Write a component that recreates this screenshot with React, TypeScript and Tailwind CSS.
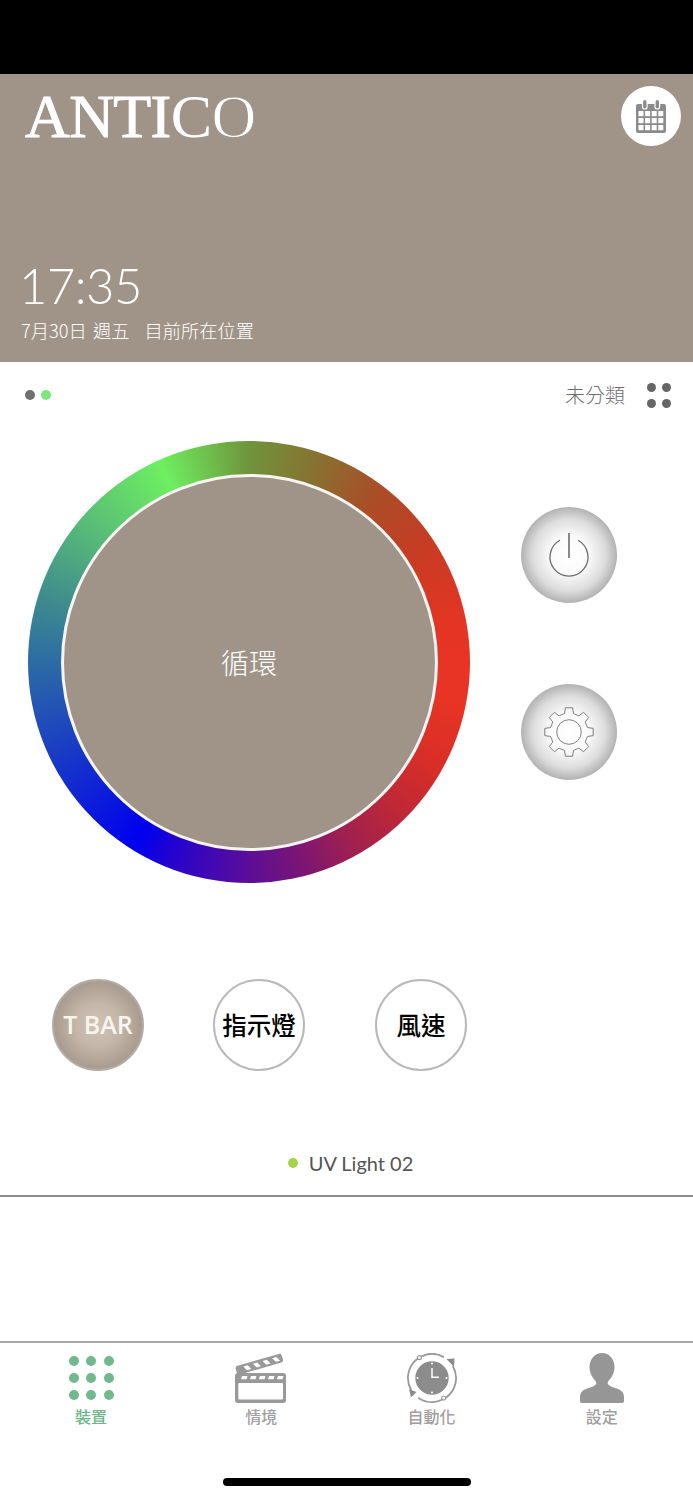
const CJK = "font-['Noto_Sans_CJK_TC',sans-serif]";

function gearPath(cx: number, cy: number, teeth: number, rOut: number, rIn: number) {
  const pts: string[] = [];
  const step = (Math.PI * 2) / teeth;
  for (let i = 0; i < teeth; i++) {
    const a = i * step - Math.PI / 2;
    const at = (r: number, d: number) =>
      `${(cx + r * Math.cos(a + d * step)).toFixed(2)} ${(cy + r * Math.sin(a + d * step)).toFixed(2)}`;
    pts.push(at(rIn, -0.3), at(rOut, -0.19), at(rOut, 0.19), at(rIn, 0.3));
  }
  return `M${pts.join("L")}Z`;
}

function CalendarIcon() {
  return (
    <svg width="32" height="36" viewBox="0 0 32 36">
      <rect x="1" y="6" width="30" height="29" rx="2" fill="#8b8b8b" />
      {[0, 1, 2, 3].map((c) =>
        [0, 1, 2].map((r) => (
          <rect key={`${c}-${r}`} x={3.5 + c * 6.6} y={13 + r * 7} width="5" height="5.2" fill="#fff" />
        )),
      )}
      <rect x="7.5" y="1.5" width="4.6" height="9.5" rx="2.3" fill="#8b8b8b" stroke="#fff" strokeWidth="1.2" />
      <rect x="20" y="1.5" width="4.6" height="9.5" rx="2.3" fill="#8b8b8b" stroke="#fff" strokeWidth="1.2" />
    </svg>
  );
}

function PowerIcon() {
  return (
    <svg width="44" height="46" viewBox="0 0 44 46" fill="none" stroke="#6c6c6c">
      <path d="M13 8.300A19 19 0 1 0 31 8.300" strokeWidth="1.3" />
      <path d="M22 1V26" strokeWidth="1.6" />
    </svg>
  );
}

function GearIcon() {
  return (
    <svg width="52" height="52" viewBox="0 0 52 52" fill="none" stroke="#7f7f7f" strokeWidth="1">
      <path d={gearPath(26, 26, 8, 24.5, 19)} strokeLinejoin="round" />
      <circle cx="26" cy="26" r="12.3" />
    </svg>
  );
}

function DevicesIcon() {
  return (
    <div className="grid grid-cols-3 gap-x-[7.500px] gap-y-[7px] w-[45px]">
      {[0, 1, 2, 3, 4, 5, 6, 7, 8].map((i) => (
        <span key={i} className="size-[10px] rounded-full bg-[#72b88d]" />
      ))}
    </div>
  );
}

function ClapperIcon() {
  return (
    <svg width="54" height="50" viewBox="0 0 54 50">
      <rect x="1" y="20" width="51" height="30" rx="3" fill="#999" />
      <rect x="4.300" y="30" width="44.700" height="16.500" rx="1" fill="#fff" />
      {[0, 1, 2, 3, 4].map((i) => (
        <path key={i} d={`M${8 + i * 9} 23h5.500l-1 3.300h-5.500z`} fill="#fff" />
      ))}
      <g transform="translate(1 13.500) rotate(-16)">
        <rect x="0" y="0" width="48" height="9" rx="2.500" fill="#999" />
        {[0, 1, 2, 3].map((i) => (
          <path key={i} d={`M${8 + i * 10} 2.300h4.500l2.500 4.500h-4.500z`} fill="#fff" />
        ))}
      </g>
    </svg>
  );
}

function AutoIcon() {
  return (
    <svg width="52" height="50" viewBox="0 0 52 50" fill="none">
      <circle cx="26" cy="25" r="16.700" fill="#8c8c8c" />
      <path d="M26 15v9.300h7" stroke="#fff" strokeWidth="1.500" />
      <circle cx="26" cy="10.500" r="1" fill="#fff" />
      <circle cx="26" cy="39.500" r="1" fill="#fff" />
      <circle cx="11.500" cy="25" r="1" fill="#fff" />
      <circle cx="40.500" cy="25" r="1" fill="#fff" />
      <g stroke="#999" strokeWidth="1.800">
        <path d="M14.700 3.800A24 24 0 0 1 38 4.200" />
        <path d="M46.800 13A24 24 0 0 1 39.800 44.700" />
        <path d="M36.100 46.800A24 24 0 0 1 12.200 44.700" />
        <path d="M5.200 37A24 24 0 0 1 12.200 5.300" />
      </g>
      <path d="M40.500 6L48.500 5.500L48 14Z" fill="#8c8c8c" />
      <path d="M3 36L10.500 39L5 44.500Z" fill="#8c8c8c" />
      <circle cx="13.400" cy="4.600" r="2" fill="#fff" stroke="#999" strokeWidth="1.200" />
      <circle cx="37.700" cy="45" r="2" fill="#fff" stroke="#999" strokeWidth="1.200" />
    </svg>
  );
}

function PersonIcon() {
  return (
    <svg width="44" height="50" viewBox="0 0 44 50">
      <path
        d="M22 0c7 0 12.500 6 12.500 14 0 6-3 11-6.500 14.500-1 2 0 3.500 3 5C38 36 44 37 44 44v4c0 1.200-.8 2-2 2H2c-1.200 0-2-.8-2-2v-4c0-7 6-8 13-10.500 3-1.500 4-3 3-5C12.500 25 9.500 20 9.500 14 9.500 6 15 0 22 0z"
        fill="#969696"
      />
    </svg>
  );
}

function OrbButton({ children }: { children: React.ReactNode }) {
  return (
    <div className="size-[96px] rounded-full flex items-center justify-center bg-[radial-gradient(circle_closest-side,#ffffff_0%,#fafafa_40%,#dddddd_75%,#b2b2b2_100%)]">
      {children}
    </div>
  );
}

function ModeButton({ label }: { label: string }) {
  return (
    <div className={`size-[92px] rounded-full border-2 border-[#b9b9b9] bg-white flex items-center justify-center text-[24.500px] font-medium text-black ${CJK}`}>
      {label}
    </div>
  );
}

function Tab({ icon, label, active }: { icon: React.ReactNode; label: string; active?: boolean }) {
  return (
    <div className="flex flex-col items-center">
      <div className="h-[50px] flex items-center justify-center">{icon}</div>
      <span className={`mt-[1px] text-[16px] leading-[24px] font-medium ${CJK} ${active ? "text-[#6db68a]" : "text-[#a0a0a0]"}`}>
        {label}
      </span>
    </div>
  );
}

export default function App() {
  return (
    <div className={`w-[693px] h-[1500px] bg-white flex flex-col overflow-hidden ${CJK}`}>
      <div className="h-[74px] bg-black" />

      <header className="h-[288px] bg-[#a09488] flex flex-col text-white">
        <div className="flex justify-between items-start pl-[25px] pr-[12px] pt-[12px]">
          <span className="mt-[-5px] text-[62px] leading-[70px] tracking-[-0.6px] font-['Liberation_Serif',serif]">
            <span className="[-webkit-text-stroke:1px_#ffffff]">ANTI</span>
            <span>C</span>
            <span className="[-webkit-text-stroke:1px_#a09488]">O</span>
          </span>
          <div className="size-[60px] rounded-full bg-white flex items-center justify-center">
            <CalendarIcon />
          </div>
        </div>
        <div className="mt-auto pl-[19px] pb-[19px]">
          <div className="text-[49px] leading-[56px] font-light tracking-[-0.5px] font-['Lato',sans-serif]">17:35</div>
          <div className="mt-[4px] pl-[2px] flex text-[18.300px] leading-[26px] font-light text-white">
            <span>7月30日</span>
            <span className="ml-[6px]">週五</span>
            <span className="ml-[15px]">目前所在位置</span>
          </div>
        </div>
      </header>

      <div className="h-[66px] pl-[25px] pr-[22px] flex items-center justify-between">
        <div className="flex gap-[6px]">
          <span className="size-[10px] rounded-full bg-[#6f6f6f]" />
          <span className="size-[10px] rounded-full bg-[#7de57c]" />
        </div>
        <div className="flex items-center gap-[22px]">
          <span className="text-[20px] font-light text-[#6e6e6e]">未分類</span>
          <div className="grid grid-cols-2 gap-x-[6px] gap-y-[7px]">
            {[0, 1, 2, 3].map((i) => (
              <span key={i} className="size-[9px] rounded-full bg-[#666]" />
            ))}
          </div>
        </div>
      </div>

      <div className="pl-[28px] pt-[13px] flex items-start">
        <div className="size-[442px] rounded-full flex items-center justify-center bg-[conic-gradient(#6f943c_0deg,#8a6f30_20deg,#a84f28_36deg,#c63c23_56deg,#e63424_81deg,#e83424_100deg,#d82e28_119deg,#c02835_134deg,#a02050_151deg,#7a1575_166deg,#5b0e98_180deg,#3004c5_198deg,#0000ee_212deg,#1c44bf_249deg,#2c6ca5_270deg,#3e8b8e_287deg,#58bb78_310deg,#6eef60_336deg,#6f943c_360deg)]">
          <div className="size-[377px] rounded-full bg-[#a09488] border-[3px] border-[#f6f5f3] flex items-center justify-center text-[28px] font-light text-white">
            循環
          </div>
        </div>
        <div className="ml-[51px] mt-[66px] flex flex-col gap-[81px]">
          <OrbButton><PowerIcon /></OrbButton>
          <OrbButton><GearIcon /></OrbButton>
        </div>
      </div>

      <div className="mt-[96px] pl-[52px] flex gap-[69px]">
        <div className="size-[92px] rounded-full border-2 border-[#b3aca5] bg-[radial-gradient(circle_closest-side,#d0c3b5_0%,#c4b6a8_50%,#a89b8f_100%)] flex items-center justify-center text-[25px] font-semibold text-[#f8f5f1] font-['Open_Sans',sans-serif]">
          T BAR
        </div>
        <ModeButton label="指示燈" />
        <div className="ml-[1px]">
          <ModeButton label="風速" />
        </div>
      </div>

      <div className="mt-[77px] h-[30px] pl-[8px] flex items-center justify-center gap-[11px]">
        <span className="size-[10px] rounded-full bg-[#a8d14a]" />
        <span className="text-[20px] text-[#555] font-['Lato',sans-serif]">UV Light 02</span>
      </div>

      <div className="mt-[17px] h-[2px] bg-[#8a8a8a]" />
      <div className="h-[144px]" />
      <div className="h-[2px] bg-[#a6a6a6]" />

      <nav className="grid grid-cols-4 px-[6px] pt-[10px]">
        <Tab active icon={<DevicesIcon />} label="裝置" />
        <Tab icon={<ClapperIcon />} label="情境" />
        <Tab icon={<AutoIcon />} label="自動化" />
        <Tab icon={<PersonIcon />} label="設定" />
      </nav>

      <div className="mt-auto mb-[14px] mx-auto w-[248px] h-[8px] rounded-full bg-black" />
    </div>
  );
}
